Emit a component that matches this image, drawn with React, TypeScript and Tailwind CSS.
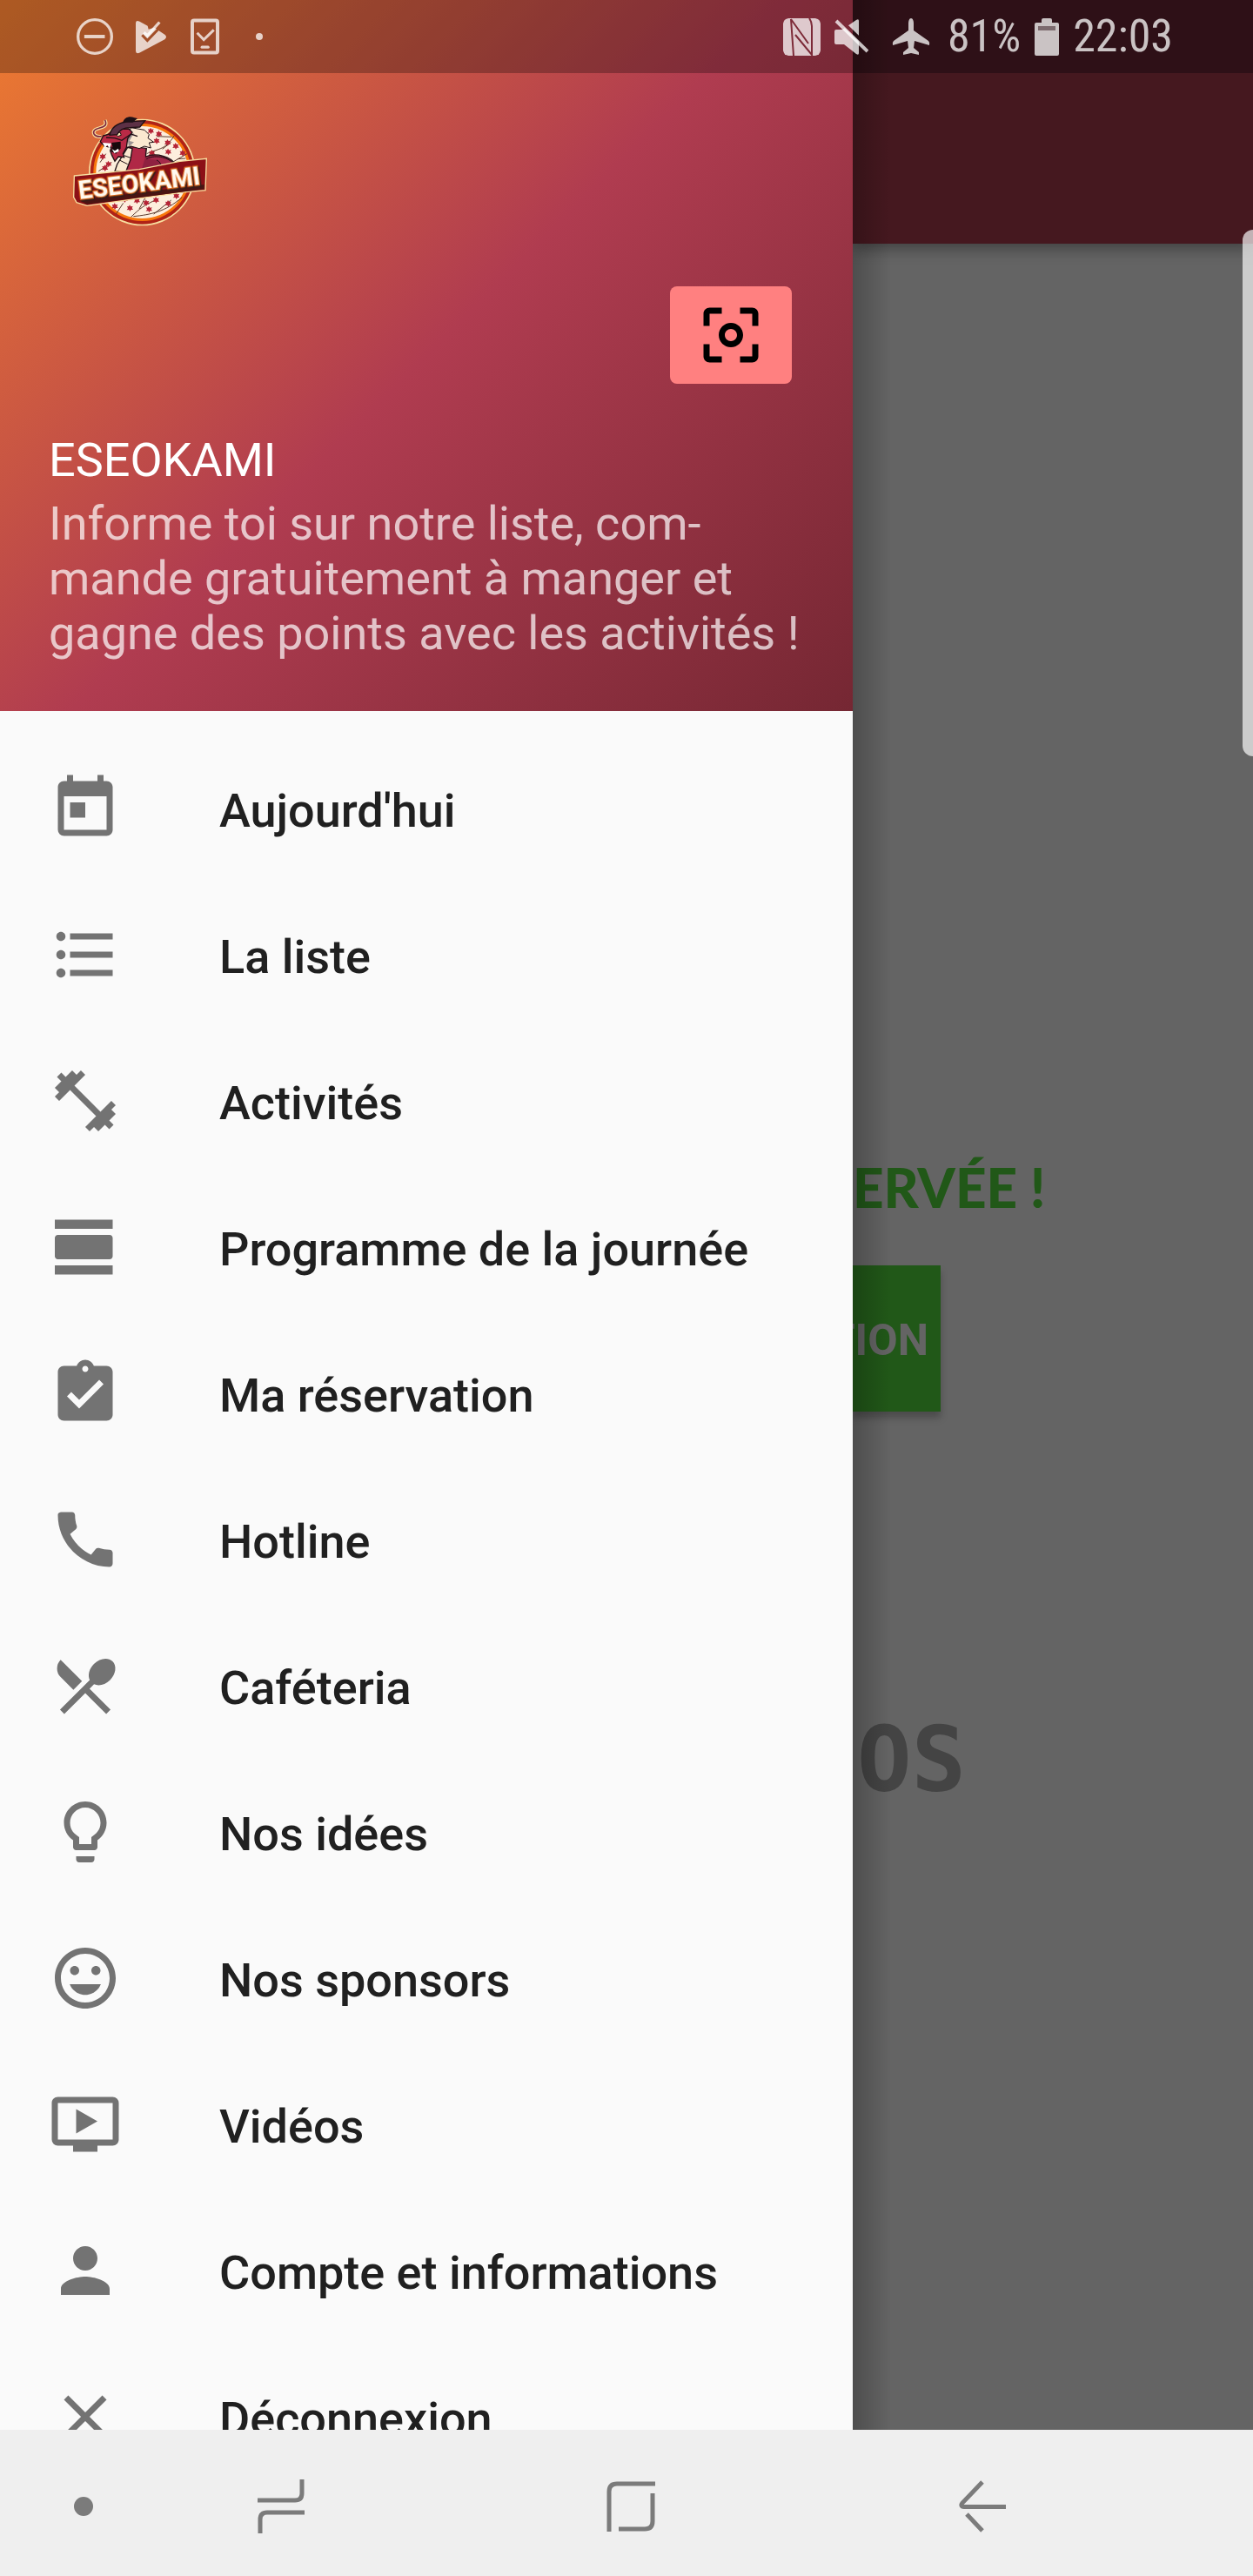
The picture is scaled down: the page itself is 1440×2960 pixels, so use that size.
import type { IconType } from "react-icons";
import {
  MdAssignmentTurnedIn,
  MdCall,
  MdCenterFocusWeak,
  MdClose,
  MdFitnessCenter,
  MdFormatListBulleted,
  MdLightbulbOutline,
  MdMood,
  MdOndemandVideo,
  MdPerson,
  MdRestaurantMenu,
  MdToday,
  MdViewDay,
} from "react-icons/md";

const menu: { label: string; icon: IconType }[] = [
  { label: "Aujourd'hui", icon: MdToday },
  { label: "La liste", icon: MdFormatListBulleted },
  { label: "Activités", icon: MdFitnessCenter },
  { label: "Programme de la journée", icon: MdViewDay },
  { label: "Ma réservation", icon: MdAssignmentTurnedIn },
  { label: "Hotline", icon: MdCall },
  { label: "Caféteria", icon: MdRestaurantMenu },
  { label: "Nos idées", icon: MdLightbulbOutline },
  { label: "Nos sponsors", icon: MdMood },
  { label: "Vidéos", icon: MdOndemandVideo },
  { label: "Compte et informations", icon: MdPerson },
  { label: "Déconnexion", icon: MdClose },
];

const blossoms = [
  [538, 486], [576, 492], [604, 504], [578, 524], [628, 528], [352, 540], [372, 566], [522, 528],
  [394, 712], [470, 692], [502, 700], [536, 690], [578, 702], [512, 722], [446, 718], [428, 688],
  [606, 676], [518, 452], [546, 462], [360, 580],
];

function Logo() {
  return (
    <svg viewBox="252 396 462 384" className="h-32 w-[154px]" role="img" aria-label="Eseokami">
      <circle cx="490" cy="594" r="184" fill="#f8dfa0" />
      <circle cx="490" cy="594" r="179" fill="#b02317" />
      <circle cx="490" cy="594" r="168" fill="#f8780c" />
      <circle cx="490" cy="594" r="159" fill="#fdeedd" />
      <g fill="none" stroke="#5b3a2e" strokeWidth="3">
        <path d="M506 530 C540 512 570 520 600 468 M540 470 L592 472 M560 514 L590 490 M600 556 L645 530 M612 548 L640 546" />
        <path d="M452 748 C480 720 500 705 540 688 M460 746 C520 740 570 730 628 680 M480 720 L505 674 M530 738 L590 690 M400 738 L425 700" />
        <path d="M340 590 L385 560 M345 560 L365 530" />
      </g>
      <g fill="#b52335">
        {blossoms.map(([x, y]) => (
          <path
            key={`${x}-${y}`}
            d={`M${x - 8} ${y - 7}l6 1 3-6 4 6 7-1-3 6 4 6-7 0-4 6-3-6-8 1 4-6z`}
          />
        ))}
      </g>
      <path d="M398 590 L424 540 L450 505 L505 512 L502 540 C540 525 590 540 606 568 L560 600 L400 615Z" fill="#8f2040" stroke="#201015" strokeWidth="4" />
      <path d="M505 548 C540 530 585 545 602 568 L555 580 C556 565 550 555 540 552" fill="#a52a4a" stroke="#201015" strokeWidth="3" />
      <path d="M456 510 L500 512 L500 545 L486 590 L436 596Z" fill="#b02846" />
      <path d="M440 508 L456 512 L450 550 L434 592 L396 590 L404 566Z" fill="#fbe9d0" stroke="#201015" strokeWidth="4" />
      <path d="M412 552 L440 566 M428 536 L450 544" stroke="#201015" strokeWidth="3" />
      <path d="M452 440 L498 448 L514 464 L510 476 L530 490 L514 492 L520 510 L498 504 L480 512 L452 504 L436 508 L436 470Z" fill="#fbe9d0" stroke="#201015" strokeWidth="3" />
      <path d="M438 470 L462 458 L446 486 L462 490 L444 506Z" fill="#9c9492" />
      <path d="M350 470 C326 474 314 456 330 446 C346 438 374 440 362 414" fill="none" stroke="#f8dfa0" strokeWidth="12" />
      <path d="M350 470 C326 474 314 456 330 446 C346 438 374 440 362 414" fill="none" stroke="#7c2740" strokeWidth="5" />
      <path d="M356 468 L384 460 L398 446 L444 444 L456 456 L440 478 L436 508 L424 530 L428 542 L408 540 L396 556 L386 536 L380 520 L384 508 L360 504 L346 488Z" fill="#b92a46" stroke="#201015" strokeWidth="4" />
      <path d="M384 492 L416 488 L416 512 L400 530 L382 522 L388 506Z" fill="#16090c" />
      <path d="M354 492 L384 494 L378 512 L370 500 L362 510Z M386 514 L396 520 L408 512 L410 522 L394 528Z" fill="#fff" />
      <path d="M398 462 L414 456 L418 466 L406 470Z" fill="#fff2b8" stroke="#201015" strokeWidth="3" />
      <path d="M378 466 C384 436 410 424 436 420 L500 416 L482 438 L448 440 C424 440 410 452 404 464Z" fill="#5c3045" stroke="#201015" strokeWidth="4" />
      <path d="M424 420 C430 404 446 398 464 406 L474 408 L458 422Z" fill="#1d1016" />
      <path d="M366 474 L396 476 L420 484 L452 462 L474 470" fill="none" stroke="#201015" strokeWidth="4" />
      <path d="M256 606 L480 584 L620 556 L712 547 L708 656 L640 662 L480 684 L300 709 L264 698 L254 680Z" fill="#8c1016" stroke="#f8dfa0" strokeWidth="4" />
      <path d="M272 690 L704 636 L704 652 L300 704Z" fill="#4b1412" />
      <text
        transform="rotate(-7 272 686)"
        x="274"
        y="686"
        fontFamily="Roboto, sans-serif"
        fontWeight="700"
        fontSize="86"
        fill="#fffaf0"
        stroke="#dd6a1c"
        strokeWidth="7"
        paintOrder="stroke"
        className="drop-shadow-[4px_5px_0_#2d1d1b]"
      >
        ESEOKAMI
      </text>
    </svg>
  );
}

function StatusBar() {
  return (
    <div className="absolute inset-x-0 top-0 z-20 flex h-[84px] items-center justify-between bg-black/27 pr-[92px] pl-[88px] text-white/75">
      <div className="flex items-center">
        <svg viewBox="264 60 128 128" className="size-[42px]" fill="none" stroke="currentColor" role="img" aria-label="Ne pas déranger">
          <circle cx="328" cy="124" r="59" strokeWidth="10" />
          <path d="M291 124H363" strokeWidth="12" />
        </svg>
        <svg viewBox="468 66 105 116" className="ml-[26px] h-[39px] w-[35px]" role="img" aria-label="Play Protect">
          <mask id="play">
            <rect x="468" y="66" width="105" height="116" fill="#fff" />
            <path d="M490 117 L508 136 L558 84" fill="none" stroke="#000" strokeWidth="9" />
          </mask>
          <path d="M468 78 Q468 64 480 70 L509 86 L512 98 L532 92 L568 116 Q578 124 568 132 L482 178 Q468 184 468 172Z" fill="currentColor" mask="url(#play)" />
          <path d="M496 108 L508 119 L550 73" fill="none" stroke="currentColor" strokeWidth="10" />
        </svg>
        <svg viewBox="656 62 100 124" className="ml-7 h-[42px] w-[33px]" fill="none" stroke="currentColor" role="img" aria-label="Mise à jour">
          <rect x="662" y="68" width="88" height="112" rx="6" strokeWidth="12" />
          <path d="M679 111 L702 135 L737 101" strokeWidth="9" />
          <path d="M696 161H717" strokeWidth="10" strokeLinecap="round" />
        </svg>
        <span className="ml-[42px] size-2 rounded-full bg-current" />
      </div>
      <div className="flex items-center gap-4 font-['Roboto_Condensed','Liberation_Sans_Narrow',Roboto,sans-serif] text-[52px] leading-none">
        <svg viewBox="0 0 43 43" className="size-[43px]" role="img" aria-label="NFC">
          <mask id="nfc">
            <rect width="43" height="43" rx="6" fill="#fff" />
            <path d="M9 1 L12 43 M9 1 L29 29 M14 19 L33 42 V9 Q33 4 30 0" fill="none" stroke="#000" strokeWidth="2" />
          </mask>
          <rect width="43" height="43" rx="6" fill="currentColor" mask="url(#nfc)" />
        </svg>
        <svg viewBox="0 0 39 42" className="h-[42px] w-[39px]" role="img" aria-label="Son coupé">
          <mask id="mute">
            <rect width="39" height="42" fill="#fff" />
            <path d="M4 0 L41 36" stroke="#000" strokeWidth="5" />
          </mask>
          <path d="M0 15 Q0 13 2 13 H9 L25 2 Q28 0 28 3 V40 Q28 43 25 41 L11 30 H2 Q0 30 0 28Z" fill="currentColor" mask="url(#mute)" />
          <path d="M2 3 L38 38" stroke="currentColor" strokeWidth="4" />
        </svg>
        <svg viewBox="0 0 44 42" className="mr-1 ml-[11px] h-[42px] w-11" fill="currentColor" role="img" aria-label="Mode avion">
          <path d="M22 0 C24 0 25 3 25 6 V14 L42 26 Q44 28 43 31 L26 26 L25 34 L31 39 V42 L22 40 L13 42 V39 L19 34 L18 26 L1 31 Q0 28 2 26 L19 14 V6 C19 3 20 0 22 0Z" />
        </svg>
        <span>81%</span>
        <svg viewBox="0 0 28 43" className="h-[43px] w-7" fill="currentColor" role="img" aria-label="Batterie">
          <path fillRule="evenodd" d="M8 5 V2 Q8 0 10 0 H18 Q20 0 20 2 V5 H26 Q28 5 28 7 V41 Q28 43 26 43 H2 Q0 43 0 41 V7 Q0 5 2 5Z M4 9 V14 H24 V9Z" />
          <rect x="4" y="9" width="20" height="5" opacity="0.5" />
        </svg>
        <span>22:03</span>
      </div>
    </div>
  );
}

function Drawer() {
  return (
    <aside className="relative z-10 flex w-[980px] max-w-[85%] shrink-0 flex-col overflow-hidden bg-[#fafafa]">
      <header className="flex shrink-0 flex-col bg-[linear-gradient(135deg,#ee7c30_0%,#b03c50_50%,#752733_100%)] px-14 pt-[132px] pb-[58px] text-[54px] leading-[63px]">
        <div className="pl-7">
          <Logo />
        </div>
        <button
          type="button"
          aria-label="Scanner un code"
          className="mt-[69px] mr-3.5 flex h-28 w-[140px] items-center justify-center self-end rounded-lg bg-[#ff8080] text-black"
        >
          <MdCenterFocusWeak className="size-[84px]" />
        </button>
        <h1 className="mt-14 text-white">ESEOKAMI</h1>
        <p className="mt-2.5 whitespace-nowrap text-white/70">
          Informe toi sur notre liste, com-
          <br />
          mande gratuitement à manger et
          <br />
          gagne des points avec les activités !
        </p>
      </header>
      <nav className="pt-7">
        <ul>
          {menu.map(({ label, icon: Icon }) => (
            <li key={label}>
              <button type="button" className="flex h-[168px] w-full items-center gap-28 px-14 text-left">
                <Icon className="size-[84px] shrink-0 text-[#737373]" />
                <span className="pt-1 text-[54px] leading-[63px] font-medium whitespace-nowrap text-[#202020]">{label}</span>
              </button>
            </li>
          ))}
        </ul>
      </nav>
    </aside>
  );
}

function Content() {
  return (
    <main className="relative flex min-w-0 flex-1 flex-col items-start bg-[#646464]">
      <div className="h-[280px] w-full shrink-0 bg-[linear-gradient(#401720_84px,#45181f_84px)] shadow-[0_6px_16px_rgba(0,0,0,0.35)]" />
      <p className="mt-[1048px] font-[Lato] text-[62px] leading-[72px] font-black whitespace-nowrap text-[#215818]">ERVÉE !</p>
      <button
        type="button"
        className="mt-[54px] flex h-[168px] w-[101px] items-center justify-end bg-[#215818] pt-1 pr-3.5 text-[50px] leading-[60px] font-bold text-[#646464] shadow-[0_7px_8px_rgba(0,0,0,0.25)]"
      >
        TION
      </button>
      <p className="mt-[340px] pl-[5px] font-['DejaVu_Sans_Mono',monospace] text-[104px] leading-[120px] font-bold text-[#444444]">OS</p>
      <div className="pointer-events-none absolute inset-y-0 left-0 w-11 bg-linear-to-r from-black/22 to-transparent" />
      <div className="absolute top-[264px] right-0 h-[605px] w-3 rounded-l-xl bg-white/67" />
    </main>
  );
}

function NavigationBar() {
  return (
    <footer className="relative z-20 grid h-[168px] shrink-0 grid-cols-[192fr_262fr_542fr_266fr_178fr] items-center justify-items-center bg-[#efefef] pt-2 text-[#7b7b7b]">
      <button type="button" aria-label="Masquer la barre" className="size-[22px] rounded-full bg-current" />
      <button type="button" aria-label="Applications récentes">
        <svg viewBox="0 0 54 62" className="h-[62px] w-[54px]" fill="none" stroke="currentColor" strokeWidth="5">
          <path d="M0 24 H43 Q51 24 51 16 V0 M54 38 H11 Q3 38 3 46 V62" />
        </svg>
      </button>
      <button type="button" aria-label="Accueil">
        <svg viewBox="0 0 56 58" className="h-[58px] w-14" fill="none" stroke="currentColor" strokeWidth="5">
          <path d="M56 3 H12 Q3 3 3 12 V58 M53 14 V46 Q53 55 44 55 H14" />
        </svg>
      </button>
      <button type="button" aria-label="Retour">
        <svg viewBox="0 0 54 60" className="h-[60px] w-[54px]" fill="none" stroke="currentColor" strokeWidth="5">
          <path d="M27 2 L4 26 Q1 30 6 30.500 H54 M9 39 L27 58" />
        </svg>
      </button>
    </footer>
  );
}

export default function App() {
  return (
    <div className="relative flex h-screen flex-col overflow-hidden font-[Roboto,sans-serif]">
      <StatusBar />
      <div className="flex min-h-0 flex-1">
        <Drawer />
        <Content />
      </div>
      <NavigationBar />
    </div>
  );
}
